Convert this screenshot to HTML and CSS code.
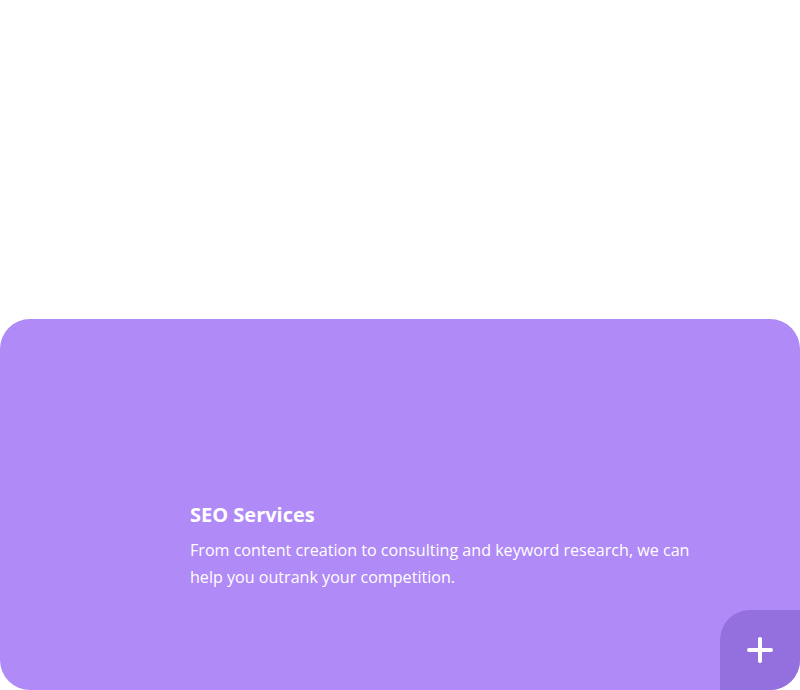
FILE: index.html
```html
<!DOCTYPE html>
<html>
<head>
<meta charset="utf-8">
<link rel="stylesheet" href="styles.css">
</head>
<body>
<main class="page">
  <section class="card">
    <div class="content">
      <h2 class="title">SEO Services</h2>
      <p class="desc">From content creation to consulting and keyword research, we can help you outrank your competition.</p>
    </div>
    <button class="more" aria-label="More">
      <svg width="28" height="28" viewBox="0 0 28 28"><path d="M14 3v22M3 14h22" stroke="#fff" stroke-width="4" stroke-linecap="round" fill="none"/></svg>
    </button>
  </section>
</main>
</body>
</html>
```
FILE: styles.css
```css
html, body { margin: 0; padding: 0; background: #fff; }
body { font-family: "Open Sans", "Noto Sans", sans-serif; }
.page { padding-top: 319px; height: 690px; box-sizing: border-box; overflow: hidden; }
.card {
  position: relative;
  height: 371px;
  box-sizing: border-box;
  background: #b08af6;
  border-radius: 30px;
  padding: 0 90px 100px 190px;
  display: flex;
  flex-direction: column;
  justify-content: flex-end;
  color: #fff;
}
.content { width: 515px; }
.title { margin: 0 0 8px; font-size: 20px; font-weight: 700; line-height: 28px; }
.desc { margin: 0; font-size: 16.1px; line-height: 26.5px; }
.more {
  position: absolute;
  right: 0; bottom: 0;
  width: 80px; height: 80px;
  border: 0; padding: 0;
  background: #9470df;
  border-radius: 30px 0 30px 0;
  display: flex; align-items: center; justify-content: center;
}
```
